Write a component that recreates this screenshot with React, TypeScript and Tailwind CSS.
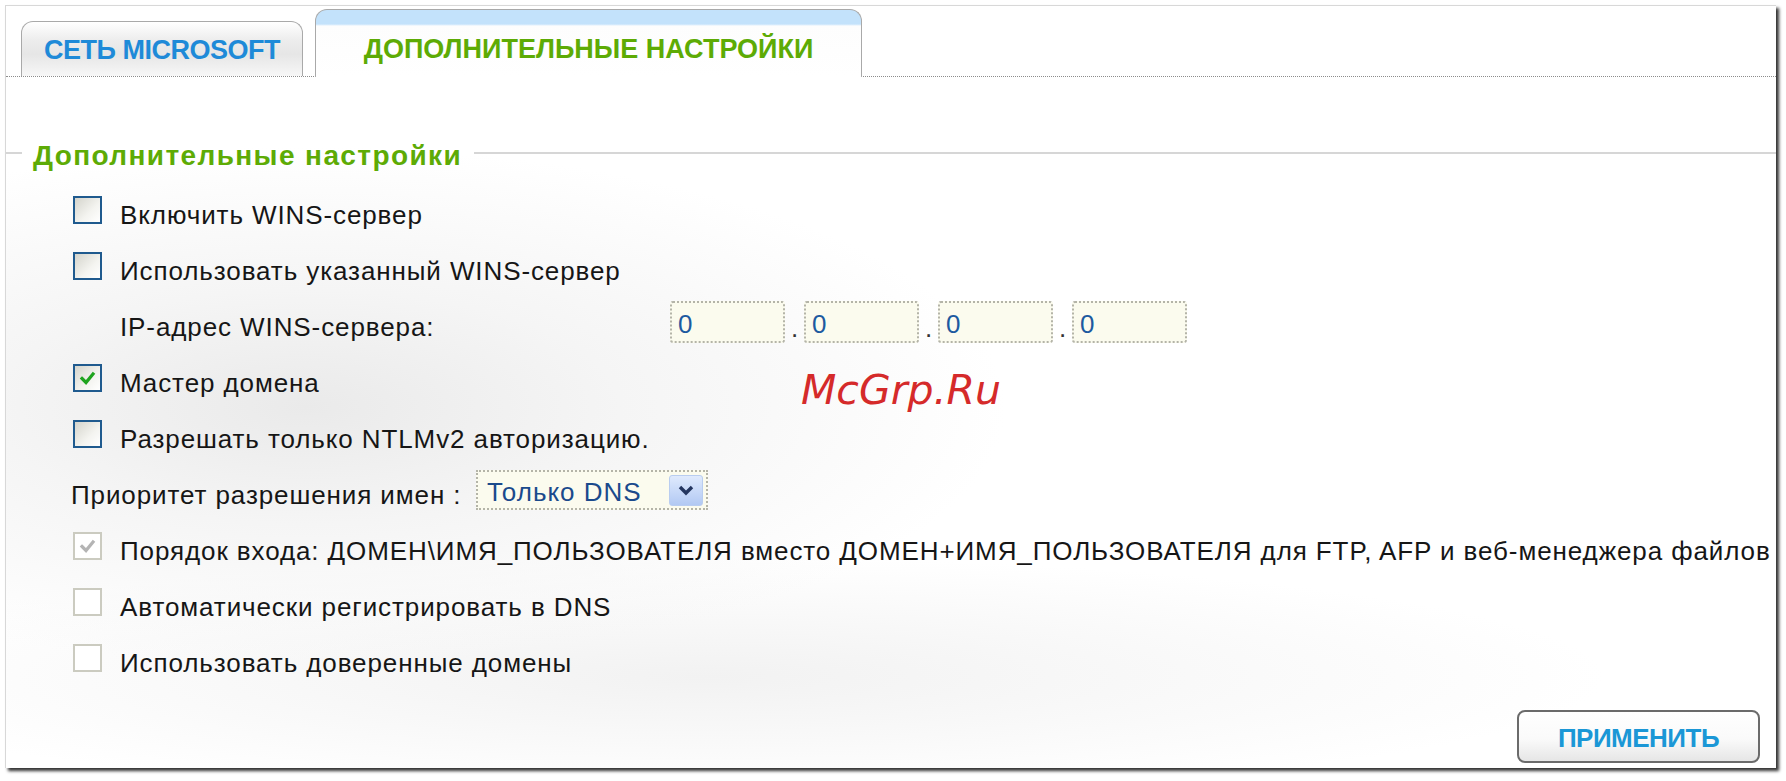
import React from "react";

const body = { fontFamily: '"Liberation Sans", Arial, sans-serif' } as const;

function Check({ mode, checked }: { mode: "on" | "off"; checked?: boolean }) {
  const cls =
    mode === "on"
      ? "border-[#1f5a8e] bg-[linear-gradient(135deg,#d4d4cc_0%,#f4f4f0_60%,#ffffff_100%)]"
      : "border-[#cbcbc0] bg-white";
  const stroke = mode === "on" ? "#1ea41e" : "#b4b4b4";
  return (
    <div className={`w-[29px] h-[28px] shrink-0 border-2 flex items-center justify-center ${cls}`}>
      {checked && (
        <svg width="17" height="15" viewBox="0 0 17 15">
          <polyline points="3,7.5 7,11.5 14,3" fill="none" stroke={stroke} strokeWidth="3.2" strokeLinecap="square" />
        </svg>
      )}
    </div>
  );
}

function CheckRow({ label, mode, checked }: { label: string; mode: "on" | "off"; checked?: boolean }) {
  return (
    <div className="h-[56px] flex items-center pl-[67px] gap-[18px]">
      <Check mode={mode} checked={checked} />
      <span className="text-[26px] leading-[30px] tracking-[0.9px] text-[#161616] pt-[9px] whitespace-nowrap">{label}</span>
    </div>
  );
}

function IpBox() {
  return (
    <div className="w-[115px] h-[42px] border-2 border-dotted border-[#b4b4a8] bg-[#fbfbee] rounded-[3px] flex items-center pl-[6px]">
      <span className="text-[26px] leading-none text-[#1d5aa0] pt-[3px]">0</span>
    </div>
  );
}

function Dot() {
  return <span className="w-[19px] text-center text-[26px] leading-none text-[#333] pt-[12px]">.</span>;
}

export default function App() {
  return (
    <div className="w-[1786px] h-[781px] bg-white overflow-hidden pt-[5px] pl-[5px]" style={body}>
      <div className="relative w-[1771px] h-[763px] border-l border-t border-[#d8d8d8] bg-white shadow-[3px_3px_3px_rgba(0,0,0,0.8)] flex flex-col">
        {/* tabs */}
        <div className="h-[71px] shrink-0 border-b border-dotted border-[#8c8c8c] flex items-end pl-[15px] gap-[12px]">
          <div className="w-[282px] h-[55px] rounded-t-[12px] border border-b-0 border-[#a9a9a9] bg-[linear-gradient(to_bottom,#ffffff_0%,#ececec_35%,#e6e6e6_60%,#f7f7f7_100%)] flex items-center justify-center">
            <span className="text-[27px] font-bold text-[#1e8ad8] tracking-[-0.5px] leading-none pt-[2px]">СЕТЬ MICROSOFT</span>
          </div>
          <div className="w-[547px] h-[68px] -mb-px rounded-t-[12px] border border-b-0 border-[#a9a9a9] bg-[linear-gradient(to_bottom,#c3e2fb_0px,#c3e2fb_14px,#fdfdfd_16px,#ffffff_100%)] flex items-center justify-center pt-[9px]">
            <span className="text-[27px] font-bold text-[#5dab05] leading-none pt-[2px]">ДОПОЛНИТЕЛЬНЫЕ НАСТРОЙКИ</span>
          </div>
        </div>

        {/* body */}
        <div className="flex-1 flex flex-col bg-[radial-gradient(ellipse_700px_260px_at_300px_330px,#eaeaea_0%,#f5f5f5_45%,rgba(255,255,255,0)_100%),radial-gradient(ellipse_900px_120px_at_700px_600px,#f2f2f2_0%,rgba(255,255,255,0)_100%)]">
          {/* legend */}
          <div className="mt-[64px] h-[30px] flex items-start">
            <div className="w-[16px] h-[2px] bg-[#d6d6d6] mt-[11px]" />
            <span className="ml-[11px] text-[28px] font-bold text-[#5dab05] leading-[30px] tracking-[1.4px] whitespace-nowrap">
              Дополнительные настройки
            </span>
            <div className="flex-1 h-[2px] bg-[#d6d6d6] mt-[11px] ml-[12px]" />
          </div>

          <div className="mt-[11px] flex flex-col">
            <CheckRow mode="on" label="Включить WINS-сервер" />
            <CheckRow mode="on" label="Использовать указанный WINS-сервер" />
            <div className="h-[56px] flex items-center pl-[114px]">
              <span className="w-[550px] text-[26px] leading-[30px] tracking-[0.9px] text-[#161616] pt-[9px] whitespace-nowrap">
                IP-адрес WINS-сервера:
              </span>
              <div className="flex items-center">
                <IpBox />
                <Dot />
                <IpBox />
                <Dot />
                <IpBox />
                <Dot />
                <IpBox />
              </div>
            </div>
            <CheckRow mode="on" checked label="Мастер домена" />
            <CheckRow mode="on" label="Разрешать только NTLMv2 авторизацию." />
            <div className="h-[56px] flex items-center pl-[65px]">
              <span className="w-[405px] text-[26px] leading-[30px] tracking-[0.9px] text-[#161616] pt-[9px] whitespace-nowrap">
                Приоритет разрешения имен :
              </span>
              <div className="w-[232px] h-[40px] border-2 border-dotted border-[#b4b4a8] bg-[#fbfbee] flex items-center pl-[9px] pr-[3px]">
                <span className="flex-1 text-[26px] leading-none tracking-[1px] text-[#1a4a8c] pt-[3px]">Только DNS</span>
                <div className="w-[34px] h-[31px] rounded-[3px] border border-[#b9cdf0] bg-[linear-gradient(to_bottom,#dfeafd,#b2c9f3)] flex items-center justify-center">
                  <svg width="18" height="14" viewBox="0 0 18 14">
                    <polyline points="3,4 9,10 15,4" fill="none" stroke="#24365f" strokeWidth="3.4" />
                  </svg>
                </div>
              </div>
            </div>
            <CheckRow
              mode="off"
              checked
              label="Порядок входа: ДОМЕН\ИМЯ_ПОЛЬЗОВАТЕЛЯ вместо ДОМЕН+ИМЯ_ПОЛЬЗОВАТЕЛЯ для FTP, AFP и веб-менеджера файлов"
            />
            <CheckRow mode="off" label="Автоматически регистрировать в DNS" />
            <CheckRow mode="off" label="Использовать доверенные домены" />
          </div>

          <div className="mt-[24px] flex justify-end pr-[16px]">
            <button className="w-[243px] h-[53px] rounded-[8px] border-2 border-[#6b6b6b] bg-[linear-gradient(to_bottom,#ffffff_0%,#fafafa_55%,#e6e6e6_100%)] flex items-center justify-center">
              <span className="text-[26px] font-bold text-[#1b97d6] tracking-[-0.5px] leading-none pt-[2px]">ПРИМЕНИТЬ</span>
            </button>
          </div>
        </div>

        <span
          className="absolute left-[795px] top-[354px] text-[41px] italic text-[#d52a2a] whitespace-nowrap"
          style={{ fontFamily: '"DejaVu Sans", sans-serif' }}
        >
          McGrp.Ru
        </span>
      </div>
    </div>
  );
}
